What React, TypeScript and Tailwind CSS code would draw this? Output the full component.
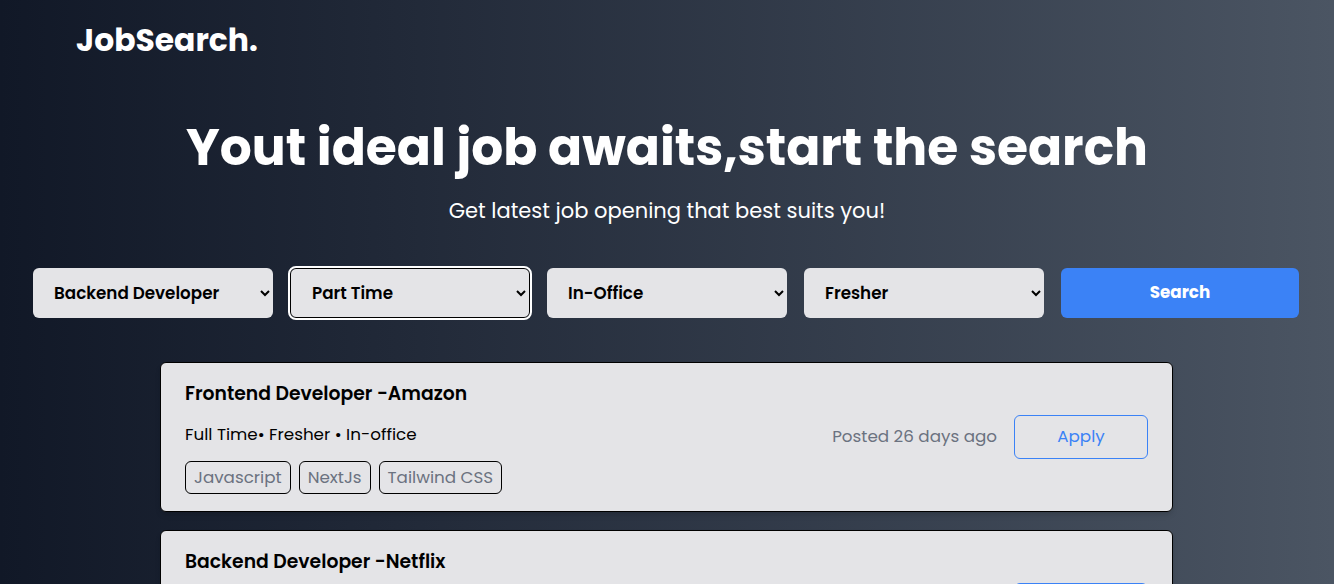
import React from 'react';

type Job = {
  title: string;
  company: string;
  type: string;
  level: string;
  mode: string;
  tags: string[];
  posted: string;
};

const JOBS: Job[] = [
  {
    title: 'Frontend Developer',
    company: 'Amazon',
    type: 'Full Time',
    level: 'Fresher',
    mode: 'In-office',
    tags: ['Javascript', 'NextJs', 'Tailwind CSS'],
    posted: 'Posted 26 days ago',
  },
  {
    title: 'Backend Developer',
    company: 'Netflix',
    type: 'Part Time',
    level: 'Experienced',
    mode: 'Remote',
    tags: ['NodeJs', 'MongoDB', 'Express'],
    posted: 'Posted 12 days ago',
  },
];

const FILTERS = [
  { value: 'Backend Developer', options: ['Frontend Developer', 'Backend Developer', 'Fullstack Developer'] },
  { value: 'Part Time', options: ['Full Time', 'Part Time', 'Contract'] },
  { value: 'In-Office', options: ['In-Office', 'Remote', 'Hybrid'] },
  { value: 'Fresher', options: ['Fresher', 'Junior', 'Senior'] },
];

function JobCard({ job }: { job: Job }) {
  return (
    <div className="flex items-center justify-between rounded-md border border-black bg-[#e4e4e7] px-6 pt-[17px] pb-[17px] shadow-md">
      <div>
        <h3 className="text-[18.8px] font-semibold leading-7 text-black">
          {job.title} -{job.company}
        </h3>
        <p className="mt-3.5 text-[16.75px] leading-6 text-black">
          {job.type}• {job.level} • {job.mode}
        </p>
        <div className="mt-[15px] flex gap-2">
          {job.tags.map(tag => (
            <span
              key={tag}
              className="rounded-md border border-black px-2 py-[3px] text-[16.75px] leading-[25px] text-[#6b7280]"
            >
              {tag}
            </span>
          ))}
        </div>
      </div>
      <div className="flex items-center gap-[17px]">
        <span className="text-[16.75px] text-[#6b7280]">{job.posted}</span>
        <button className="h-11 w-[134px] rounded-md border border-[#3b82f6] text-[16.75px] text-[#3b82f6]">
          Apply
        </button>
      </div>
    </div>
  );
}

export default function App() {
  return (
    <div
      className="min-h-screen bg-gradient-to-r from-[#111827] to-[#4b5563] text-white"
      style={{ fontFamily: "Poppins, 'Open Sans', sans-serif" }}
    >
      <nav className="pl-[76px] pt-5">
        <h1 className="text-[31.4px] font-bold leading-10">JobSearch.</h1>
      </nav>

      <section className="mt-[58px] flex flex-col items-center">
        <h2 className="text-[50.3px] font-bold leading-[60px]">Yout ideal job awaits,start the search</h2>
        <p className="mt-[19px] text-[21px] leading-7">Get latest job opening that best suits you!</p>
      </section>

      <div className="mt-[43px] flex gap-[17px] pl-[33px]">
        {FILTERS.map((f, i) => (
          <select
            key={f.value}
            defaultValue={f.value}
            className={`h-[50px] w-[240px] rounded-md bg-[#e4e4e7] pl-[17px] pr-2 text-[16.75px] font-semibold text-black ${
              i === 1 ? 'border border-black outline-2 outline-offset-0 outline-white' : ''
            }`}
          >
            {f.options.map(o => (
              <option key={o}>{o}</option>
            ))}
          </select>
        ))}
        <button className="h-[50px] w-[238px] rounded-md bg-[#3b82f6] text-[16.75px] font-bold text-white">
          Search
        </button>
      </div>

      <div className="ml-[160px] mt-[44px] flex w-[1013px] flex-col gap-[18px]">
        {JOBS.map(job => (
          <JobCard key={job.title} job={job} />
        ))}
      </div>
    </div>
  );
}
